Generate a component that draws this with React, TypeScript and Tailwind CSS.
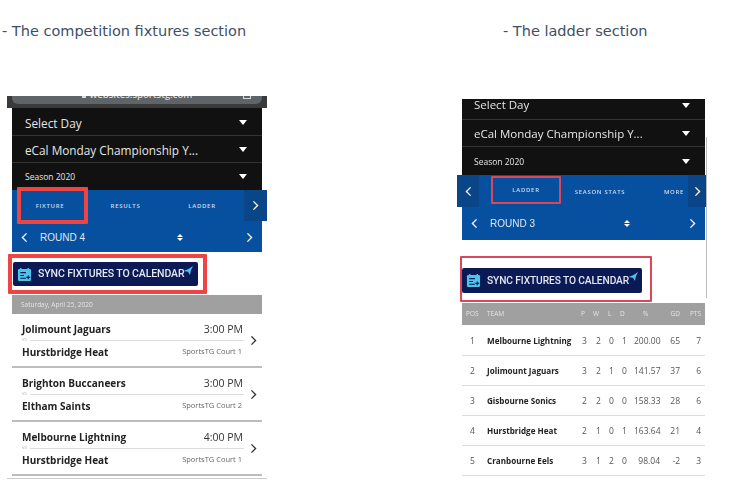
import React from "react";

const fixtures = [
  { home: "Jolimount Jaguars", away: "Hurstbridge Heat", time: "3:00 PM", court: "SportsTG Court 1" },
  { home: "Brighton Buccaneers", away: "Eltham Saints", time: "3:00 PM", court: "SportsTG Court 2" },
  { home: "Melbourne Lightning", away: "Hurstbridge Heat", time: "4:00 PM", court: "SportsTG Court 1" },
];

const ladder = [
  ["1", "Melbourne Lightning", "3", "2", "0", "1", "200.00", "65", "7"],
  ["2", "Jolimount Jaguars", "3", "2", "1", "0", "141.57", "37", "6"],
  ["3", "Gisbourne Sonics", "2", "2", "0", "0", "158.33", "28", "6"],
  ["4", "Hurstbridge Heat", "2", "1", "0", "1", "163.64", "21", "4"],
  ["5", "Cranbourne Eels", "3", "1", "2", "0", "98.04", "-2", "3"],
];

function Chevron({ dir, className }: { dir: "left" | "right"; className?: string }) {
  return (
    <svg viewBox="0 0 10 16" className={className} fill="none" stroke="currentColor" strokeWidth="2">
      <path d={dir === "right" ? "M2 2l6 6-6 6" : "M8 2L2 8l6 6"} />
    </svg>
  );
}

function SelectRow({ label, className, textClass }: { label: string; className: string; textClass?: string }) {
  return (
    <div className={"flex items-center justify-between border-b border-[#333] text-[#e6e6e6] " + className}>
      <span className={textClass}>{label}</span>
      <span className="h-0 w-0 border-x-[4px] border-t-[5px] border-x-transparent border-t-white" />
    </div>
  );
}

function RoundRow({ label, className, gapClass }: { label: string; className: string; gapClass: string }) {
  return (
    <div className={"flex items-center bg-[#07509f] text-white " + className}>
      <Chevron dir="left" className="h-[11px] w-[7px]" />
      <span className={"ml-[12px] text-[10px] font-['Liberation_Sans'] text-[#dfe8f4] " + gapClass}>{label}</span>
      <span className="flex flex-col gap-[1px]">
        <span className="h-0 w-0 border-x-[3px] border-b-[3px] border-x-transparent border-b-white" />
        <span className="h-0 w-0 border-x-[3px] border-t-[3px] border-x-transparent border-t-white" />
      </span>
      <Chevron dir="right" className="ml-auto h-[11px] w-[7px]" />
    </div>
  );
}

function CalendarIcon() {
  return (
    <svg viewBox="0 0 16 16" className="h-[15px] w-[15px] shrink-0">
      <rect x="1" y="2" width="14" height="13" rx="1.5" fill="#4fc3ea" />
      <path d="M4 1v3M12 1v3" stroke="#4fc3ea" strokeWidth="1.5" />
      <path d="M3.5 6h6M3.5 9h4M3.5 12h6" stroke="#0b1a55" strokeWidth="1.2" />
      <path d="M12 9v4M10 11h4" stroke="#0b1a55" strokeWidth="1.2" />
    </svg>
  );
}

function SyncButton({ className }: { className: string }) {
  return (
    <div className={"flex shrink-0 items-center rounded-[2px] bg-[#0b1a55] pl-[4px] font-['Roboto'] font-medium text-[#e4e8f2] " + className}>
      <CalendarIcon />
      <span className="ml-[6px] whitespace-nowrap tracking-[-0.1px]">SYNC FIXTURES TO CALENDAR</span>
      <svg viewBox="0 0 10 9" className="-mt-[8px] -ml-px h-[9px] w-[10px] shrink-0">
        <path d="M10 0L7.8 4.5 7 9 5 5.8 0.5 5 5.5 3z" fill="#4fc3ea" />
      </svg>
    </div>
  );
}

function FixtureRow({ home, away, time, court }: (typeof fixtures)[number]) {
  return (
    <div className="flex h-[54px] items-center border-b-2 border-[#bdbdbd] pl-[10px] pr-[5px] font-['Open_Sans']">
      <div className="flex-1">
        <div className="flex items-center justify-between pr-[1px] text-[10px] leading-[14px]">
          <span className="font-bold text-[#222]">{home}</span>
          <span className="text-[10.5px] text-[#333]">{time}</span>
        </div>
        <div className="flex h-[9px] items-center gap-[3px] text-[4px] text-[#aaa]">
          <span>VS</span>
          <span className="h-px flex-1 bg-[#ddd]" />
        </div>
        <div className="flex items-center justify-between pr-[2px] text-[10px] leading-[14px]">
          <span className="font-bold text-[#222]">{away}</span>
          <span className="-mt-px text-[7.5px] text-[#666]">{court}</span>
        </div>
      </div>
      <Chevron dir="right" className="ml-[6px] h-[11px] w-[7px] text-[#333]" />
    </div>
  );
}

const ladderCols = "grid grid-cols-[25px_93px_14px_13px_13px_14px_26px_20px_21px_1fr] items-center";

function LadderTable() {
  return (
    <div className="font-['Open_Sans']">
      <div className={ladderCols + " h-[22px] bg-[#a0a0a0] text-[6.5px] text-[#e4e4e4]"}>
        <span className="pl-[4px]">POS</span>
        <span>TEAM</span>
        <span className="pl-[1px]">P</span>
        <span className="-ml-px">W</span>
        <span className="pl-[1px]">L</span>
        <span>D</span>
        <span className="pl-[9px]">%</span>
        <span className="whitespace-nowrap text-right">GD</span>
        <span className="whitespace-nowrap text-right">PTS</span>
      </div>
      {ladder.map((row, i) => (
        <div
          key={row[0]}
          className={
            ladderCols +
            " border-b border-[#ddd] pt-[2px] text-[8.5px] text-[#555] " +
            (i === 0 ? "h-[31px]" : "h-[30px]")
          }
        >
          <span className="pl-[8px]">{row[0]}</span>
          <span className="whitespace-nowrap text-[8.1px] font-bold text-[#222]">{row[1]}</span>
          <span className="pl-[2px]">{row[2]}</span>
          <span className="pl-[2px]">{row[3]}</span>
          <span className="pl-[2px]">{row[4]}</span>
          <span className="pl-[2px]">{row[5]}</span>
          <span className="whitespace-nowrap text-right">{row[6]}</span>
          <span className="text-right">{row[7]}</span>
          <span className="text-right">{row[8]}</span>
        </div>
      ))}
    </div>
  );
}

function Tab({ label, className }: { label: string; className: string }) {
  return (
    <span className={"flex shrink-0 items-center justify-center text-[6px] tracking-[0.7px] text-[#cfdcee] font-['Open_Sans'] font-semibold " + className}>
      {label}
    </span>
  );
}

export default function App() {
  return (
    <div className="flex h-[489px] w-[732px] overflow-hidden bg-white font-['Open_Sans']">
      {/* fixtures */}
      <div className="w-[457px] shrink-0">
        <p className="mt-[22px] ml-[2px] h-[74px] text-[14.5px] leading-[19px] text-[#3d4f68] font-['DejaVu_Sans']">
          - The competition fixtures section
        </p>
        <div className="ml-[7px] w-[260px] blur-[0.4px]">
          <div className="h-[12px] overflow-hidden bg-[#3a3a3a] px-[5px]">
            <div className="relative flex h-[8px] items-start justify-center overflow-hidden rounded-b-[6px] bg-[#5f6468] text-[9.5px] leading-[8px] text-[#ddd]">
              <span className="mr-[4px] h-[2px] w-[4px] bg-[#ddd]" />
              <span className="-mt-[5px] font-semibold">websites.sportstg.com</span>
              <span className="absolute right-[11px] top-0 h-[3px] w-[8px] border border-t-0 border-[#ddd]" />
            </div>
          </div>
          <div className="mx-[5px] bg-[#111]">
            <SelectRow label="Select Day" className="h-[28px] pl-[13px] pr-[15px] pt-px text-[11.8px]" textClass="pt-[3px]" />
            <SelectRow label="eCal Monday Championship Y..." className="h-[27px] pl-[13px] pr-[15px] text-[11.8px]" textClass="pt-[4px]" />
            <SelectRow label="Season 2020" className="h-[27px] border-b-0 pl-[13px] pr-[15px] text-[8.5px]" textClass="pt-[2px]" />
          </div>
          <div className="ml-[5px] flex h-[31px] items-center bg-[#07509f]">
            <div className="flex w-[232px] items-center">
              <Tab label="FIXTURE" className="ml-[5px] h-[37px] w-[71px] rounded-[1px] border-[4px] border-[#ef4444] pr-[5px] pt-[2px]" />
              <Tab label="RESULTS" className="w-[75px] pt-[2px]" />
              <Tab label="LADDER" className="w-[78px] pt-[2px]" />
            </div>
            <div className="flex h-full flex-1 items-center justify-center bg-[#0a4587] text-white">
              <Chevron dir="right" className="h-[11px] w-[7px]" />
            </div>
          </div>
          <RoundRow label="ROUND 4" gapClass="w-[137px]" className="mx-[5px] h-[31px] px-[9px] pt-px" />
          <div className="ml-px mt-[2px] flex h-[40px] w-[199px] items-center rounded-[1px] border-[4px] border-[#ef4444] pl-px">
            <SyncButton className="h-[24px] w-[185px] text-[10.5px]" />
          </div>
          <div className="mx-[5px] mt-px">
            <div className="flex h-[19px] items-center bg-[#a0a0a0] pl-[9px] text-[6.5px] text-[#e4e4e4]">
              Saturday, April 25, 2020
            </div>
            {fixtures.map((f) => (
              <FixtureRow key={f.home} {...f} />
            ))}
          </div>
          <div className="mt-[2px] h-px bg-[#ccc]" />
        </div>
      </div>

      {/* ladder */}
      <div className="flex-1">
        <p className="mt-[22px] ml-[46px] h-[77px] text-[14.5px] leading-[19px] text-[#3d4f68] font-['DejaVu_Sans']">
          - The ladder section
        </p>
        <div className="relative w-[250px] blur-[0.4px]">
          {/* thin page edge line running behind the cards */}
          <span className="absolute left-[249px] top-[38px] h-[161px] w-px bg-[#bbb]" />
          <div className="ml-[5px] mr-[2px] bg-[#111]">
            <SelectRow label="Select Day" className="h-[21px] pb-[8px] pl-[12px] pr-[15px] text-[11.5px]" />
            <SelectRow label="eCal Monday Championship Y..." className="h-[27px] pl-[12px] pr-[15px] text-[11.5px]" textClass="pt-[2px]" />
            <SelectRow label="Season 2020" className="h-[28px] border-b-0 pl-[12px] pr-[15px] text-[8.5px]" textClass="pt-[2px]" />
          </div>
          <div className="flex h-[32px] bg-[#07509f]">
            <div className="flex w-[22px] items-center justify-center bg-[#0a4587] text-white">
              <Chevron dir="left" className="h-[11px] w-[7px]" />
            </div>
            <Tab label="LADDER" className="ml-[12px] mt-[1px] h-[28px] w-[70px] rounded-[1px] border-[2px] border-[#d9475c]" />
            <Tab label="SEASON STATS" className="ml-[10px] mt-[2px] w-[58px]" />
            <Tab label="MORE" className="ml-[33px] mt-[2px] w-[24px]" />
            <div className="ml-auto flex w-[19px] items-center justify-center bg-[#0a4587] text-white">
              <Chevron dir="right" className="h-[11px] w-[7px]" />
            </div>
          </div>
          <RoundRow label="ROUND 3" gapClass="w-[134px]" className="ml-[5px] mr-[2px] h-[33px] px-[9px]" />
          <div className="ml-[3px] mt-[16px] flex h-[46px] w-[192px] items-center rounded-[1px] border-[2px] border-[#d9475c]">
            <SyncButton className="mt-[3px] h-[25px] w-[180px] text-[10.2px]" />
          </div>
          <div className="ml-[5px] mr-[2px] mt-px">
            <LadderTable />
          </div>
        </div>
      </div>
    </div>
  );
}
